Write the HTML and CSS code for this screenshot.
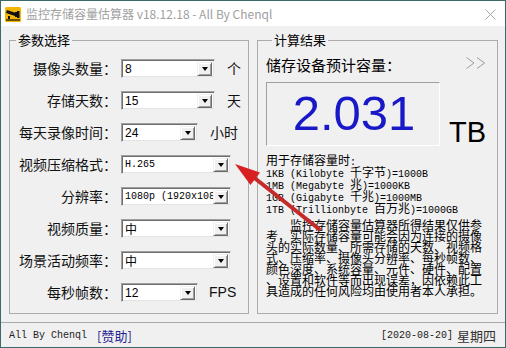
FILE: index.html
```html
<!DOCTYPE html>
<html>
<head>
<meta charset="utf-8">
<link rel="stylesheet" href="styles.css">
</head>
<body>
<div class="win">
  <div class="titlebar">
    <svg class="appicon" width="16" height="15" viewBox="0 0 16 15">
      <rect x="0" y="0" width="16" height="15" rx="1.5" fill="#f2b705"/>
      <polygon points="2,3 11,6 10,9 1,6" fill="#111"/>
      <rect x="10" y="5" width="2" height="5" fill="#111"/>
      <rect x="12" y="4" width="2.5" height="7" fill="#111"/>
      <rect x="3" y="9" width="2" height="3" fill="#111"/>
      <rect x="1" y="12" width="14" height="2" fill="#6a5200"/>
    </svg>
    <span class="title">监控存储容量估算器 v18.12.18 - All By Chenql</span>
    <svg class="close" width="11" height="11" viewBox="0 0 11 11">
      <path d="M0.5 0.5 L10.5 10.5 M10.5 0.5 L0.5 10.5" stroke="#a8a8a8" stroke-width="1" fill="none"/>
    </svg>
  </div>
  <div class="body">
    <div class="panels">
      <fieldset class="group left">
        <legend>参数选择</legend>
        <div class="rows">
          <div class="row">
            <span class="lbl">摄像头数量：</span>
            <span class="combo w94"><span class="val">8</span><span class="btn"><i></i></span></span>
            <span class="unit">个</span>
          </div>
          <div class="row">
            <span class="lbl">存储天数：</span>
            <span class="combo w94"><span class="val">15</span><span class="btn"><i></i></span></span>
            <span class="unit">天</span>
          </div>
          <div class="row">
            <span class="lbl">每天录像时间：</span>
            <span class="combo w77"><span class="val">24</span><span class="btn"><i></i></span></span>
            <span class="unit">小时</span>
          </div>
          <div class="row">
            <span class="lbl">视频压缩格式：</span>
            <span class="combo w110"><span class="val mono">H.265</span><span class="btn"><i></i></span></span>
          </div>
          <div class="row">
            <span class="lbl">分辨率：</span>
            <span class="combo w110"><span class="val mono">1080p (1920x108</span><span class="btn"><i></i></span></span>
          </div>
          <div class="row">
            <span class="lbl">视频质量：</span>
            <span class="combo w110"><span class="val cjk">中</span><span class="btn"><i></i></span></span>
          </div>
          <div class="row">
            <span class="lbl">场景活动频率：</span>
            <span class="combo w110"><span class="val cjk">中</span><span class="btn"><i></i></span></span>
          </div>
          <div class="row">
            <span class="lbl">每秒帧数：</span>
            <span class="combo w77"><span class="val">12</span><span class="btn"><i></i></span></span>
            <span class="unit fps">FPS</span>
          </div>
        </div>
      </fieldset>
      <fieldset class="group right">
        <legend>计算结果</legend>
        <div class="head">
          <span class="htext">储存设备预计容量：</span>
          <svg class="more" width="20" height="12" viewBox="0 0 20 12">
            <path d="M0.5 0.5 L8 6 L0.5 11.5 M11 0.5 L18.5 6 L11 11.5" stroke="#9a9a9a" stroke-width="1" fill="none"/>
          </svg>
        </div>
        <div class="result">
          <div class="display">2.031</div>
          <span class="tb">TB</span>
        </div>
        <div class="info">
          <div class="il"><span class="cj">用于存储容量时</span>:</div>
          <div class="il">1KB (Kilobyte <span class="cj">千字节</span>)=1000B</div>
          <div class="il">1MB (Megabyte <span class="cj">兆</span>)=1000KB</div>
          <div class="il">1GB (Gigabyte <span class="cj">千兆</span>)=1000MB</div>
          <div class="il">1TB (Trillionbyte <span class="cj">百万兆</span>)=1000GB</div>
        </div>
        <div class="para">
          <span class="pl">　　监控存储容量估算器所得结果仅供参</span>
          <span class="pl">考，实际存储容量可能会因为连接的摄像</span>
          <span class="pl">头的实际数量、所需存储的天数、视频格</span>
          <span class="pl">式、压缩率、摄像头分辨率、每秒帧数、</span>
          <span class="pl">颜色深度、系统容量、元件、硬件、配置</span>
          <span class="pl">、设置和软件等而出现误差，因依赖此工</span>
          <span class="pl">具造成的任何风险均由使用者本人承担。</span>
        </div>
      </fieldset>
    </div>
    <div class="status">
      <span class="sleft"><span class="mono2">All By Chenql</span><span class="sponsor">[赞助]</span></span>
      <span class="sright"><span class="mono2">[2020-08-20]</span> <span class="week">星期四</span></span>
    </div>
  </div>
  <svg class="arrow" width="506" height="348" viewBox="0 0 506 348">
    <line x1="252" y1="176" x2="319" y2="229" stroke="#c42a2a" stroke-width="4" stroke-linecap="round"/>
    <polygon points="235,164 260,172.5 250.5,185" fill="#d82020"/>
  </svg>
</div>
</body>
</html>
```

FILE: styles.css
```css
* { box-sizing: border-box; }
html, body { margin: 0; padding: 0; }
body {
  width: 506px;
  height: 348px;
  overflow: hidden;
  font-family: "Noto Sans CJK SC", "Liberation Sans", sans-serif;
  color: #000;
}
.win {
  position: relative;
  width: 506px;
  height: 348px;
  border: 1px solid #3b6a6a;
  background: #f0f0f0;
  display: flex;
  flex-direction: column;
}
.titlebar {
  height: 25px;
  background: #fff;
  display: flex;
  align-items: center;
  padding-left: 4px;
  padding-right: 9px;
}
.appicon { margin-top: 1px; }
.title {
  margin-left: 5px;
  font-size: 12px;
  color: #a0a0a0;
  font-family: "Noto Sans CJK SC", "Liberation Sans", sans-serif;
  flex: 1;
  line-height: 16px;
}
.close { margin-top: 2px; }
.body {
  flex: 1;
  display: flex;
  flex-direction: column;
}
.panels {
  display: flex;
  gap: 8px;
  padding: 6px 7px 0 8px;
}
.group {
  margin: 0;
  height: 282px;
  border: 1px solid #acacac;
  padding: 0;
  min-width: 0;
}
.group legend {
  font-size: 13px;
  line-height: 16px;
  padding: 0 2px;
  margin-left: 6px;
}
.group.left { width: 240px; }
.group.right { width: 241px; padding: 8px 11px 0 8px; }

.rows {
  display: flex;
  flex-direction: column;
  padding-top: 11px;
}
.row {
  height: 32px;
  display: flex;
  align-items: flex-start;
}
.lbl {
  width: 107px;
  text-align: right;
  font-size: 14px;
  line-height: 19px;
  color: #111;
}
.combo {
  margin-left: 4px;
  height: 19px;
  background: #fff;
  border: 1px solid;
  border-color: #a0a0a0 #f0f0f0 #f0f0f0 #a0a0a0;
  box-shadow: inset 1px 1px 0 #6e6e6e, inset -1px -1px 0 #e3e3e3;
  display: flex;
  align-items: center;
  padding: 1px 2px 1px 3px;
}
.w94 { width: 94px; }
.w77 { width: 77px; }
.w110 { width: 110px; }
.val {
  flex: 1;
  font-family: "Liberation Sans", sans-serif;
  font-size: 12px;
  line-height: 16px;
  white-space: nowrap;
  overflow: hidden;
}
.val.mono {
  font-family: "Liberation Mono", monospace;
  font-size: 10px;
  letter-spacing: 0;
}
.val.cjk {
  font-family: "Noto Sans CJK SC", sans-serif;
  font-size: 12px;
}
.btn {
  width: 15px;
  height: 14px;
  background: #f0f0f0;
  border: 1px solid;
  border-color: #f0f0f0 #696969 #696969 #f0f0f0;
  box-shadow: inset 1px 1px 0 #fff, inset -1px -1px 0 #a0a0a0;
  display: flex;
  align-items: center;
  justify-content: center;
}
.btn i {
  width: 0;
  height: 0;
  border-left: 3.5px solid transparent;
  border-right: 3.5px solid transparent;
  border-top: 4px solid #000;
  margin-top: 1px;
}
.unit {
  margin-left: 12px;
  font-size: 14px;
  line-height: 19px;
  color: #111;
}
.unit.fps {
  font-family: "Liberation Sans", sans-serif;
  font-size: 14px;
  margin-left: 11px;
}

.head {
  display: flex;
  justify-content: space-between;
  align-items: flex-start;
  height: 18px;
}
.htext {
  font-size: 15px;
  line-height: 18px;
}
.more { margin-top: 1px; }
.result {
  margin-top: 8px;
  display: flex;
  align-items: flex-end;
}
.display {
  width: 182px;
  height: 64px;
  border: 1px solid;
  border-color: #a0a0a0 #fff #fff #a0a0a0;
  background: #f0f0f0;
  color: #1818c8;
  font-family: "Liberation Sans", sans-serif;
  font-size: 49px;
  line-height: 60px;
  text-align: center;
  padding-left: 2px;
}
.tb {
  margin-left: 9px;
  font-family: "Liberation Sans", sans-serif;
  font-size: 29px;
  line-height: 24px;
  margin-bottom: 2px;
}
.info {
  margin-top: 8px;
}
.il {
  font-family: "Liberation Mono", monospace;
  font-size: 10px;
  line-height: 12px;
  height: 12px;
  white-space: nowrap;
}
.il .cj {
  font-family: "Noto Sans CJK SC", sans-serif;
  font-size: 12px;
}
.para {
  margin-top: 5px;
  display: flex;
  flex-direction: column;
  font-size: 12px;
  line-height: 11px;
}
.pl {
  display: block;
  height: 11px;
  white-space: nowrap;
}

.status {
  margin-top: 8px;
  border-top: 1px solid #a8a8a8;
  flex: 1;
  display: flex;
  align-items: center;
  justify-content: space-between;
  padding: 0 9px 0 8px;
}
.mono2 {
  font-family: "Liberation Mono", monospace;
  font-size: 10px;
  color: #222;
}
.sponsor {
  margin-left: 10px;
  color: #1f1f90;
  font-size: 13px;
}
.week {
  font-size: 13px;
  color: #333;
}
.sright { display: flex; align-items: center; gap: 4px; }
.sleft { display: flex; align-items: center; }

.arrow {
  position: absolute;
  left: -1px;
  top: -1px;
  pointer-events: none;
}
```
